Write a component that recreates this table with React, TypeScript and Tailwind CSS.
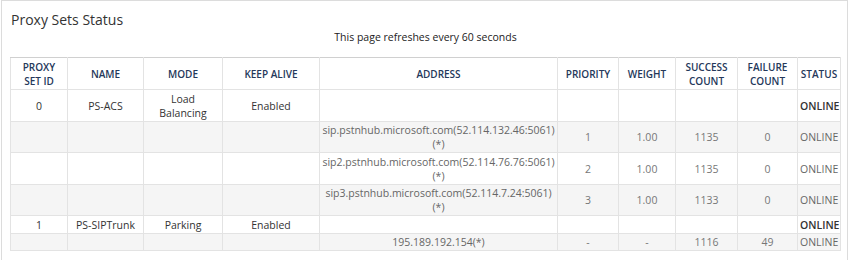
const cols = [57, 76, 79, 97, 238, 61, 57, 62, 60, 43]

type Row = {
  id: string
  name: string
  mode: string
  keepAlive: string
  address: string
  priority: string
  weight: string
  success: string
  failure: string
  status: string
  group?: boolean
  shaded?: boolean
  h: string
}

const rows: Row[] = [
  { id: "0", name: "PS-ACS", mode: "Load Balancing", keepAlive: "Enabled", address: "", priority: "", weight: "", success: "", failure: "", status: "ONLINE", group: true, h: "h-[32px]" },
  { id: "", name: "", mode: "", keepAlive: "", address: "sip.pstnhub.microsoft.com(52.114.132.46:5061)", priority: "1", weight: "1.00", success: "1135", failure: "0", status: "ONLINE", shaded: true, h: "h-[31px]" },
  { id: "", name: "", mode: "", keepAlive: "", address: "sip2.pstnhub.microsoft.com(52.114.76.76:5061)", priority: "2", weight: "1.00", success: "1135", failure: "0", status: "ONLINE", h: "h-[32px]" },
  { id: "", name: "", mode: "", keepAlive: "", address: "sip3.pstnhub.microsoft.com(52.114.7.24:5061)", priority: "3", weight: "1.00", success: "1133", failure: "0", status: "ONLINE", shaded: true, h: "h-[31px]" },
  { id: "1", name: "PS-SIPTrunk", mode: "Parking", keepAlive: "Enabled", address: "", priority: "", weight: "", success: "", failure: "", status: "ONLINE", group: true, h: "h-[18px]" },
  { id: "", name: "", mode: "", keepAlive: "", address: "195.189.192.154(*)", priority: "-", weight: "-", success: "1116", failure: "49", status: "ONLINE", shaded: true, h: "h-[17px]" },
]

const headers = [
  ["PROXY", "SET ID"],
  ["NAME"],
  ["MODE"],
  ["KEEP ALIVE"],
  ["ADDRESS"],
  ["PRIORITY"],
  ["WEIGHT"],
  ["SUCCESS", "COUNT"],
  ["FAILURE", "COUNT"],
  ["STATUS"],
]

const cell = "border border-[#e3e3e3] px-[2px] py-0 text-center align-middle leading-[14px]"

const App = () => {
  return (
    <div className="w-[850px] h-[260px] overflow-hidden bg-white font-['Open_Sans',sans-serif]">
      <div className="ml-[1px] w-[847px] h-[300px] border border-[#dcdcdc] px-[8px] pt-[10px]">
        <h1 className="text-[14px] leading-[18px] text-[#333] pl-[1px]">Proxy Sets Status</h1>
        <p className="text-center text-[10.5px] leading-[14px] text-[#222] mt-[1px] pl-[2px]">This page refreshes every 60 seconds</p>
        <table className="mt-[13px] border-collapse table-fixed w-[830px] text-[10.5px]">
          <colgroup>
            {cols.map((w, i) => (
              <col key={i} style={{ width: w }} />
            ))}
          </colgroup>
          <thead>
            <tr className="h-[32px]">
              {headers.map((lines, i) => (
                <th key={i} className={`${cell} text-[10px] font-semibold text-[#25385a] leading-[13px] border-t-[#d0d0d0]`}>
                  {lines.map((l, j) => (
                    <div key={j}>{l}</div>
                  ))}
                </th>
              ))}
            </tr>
          </thead>
          <tbody>
            {rows.map((r, i) => (
              <tr key={i} className={`${r.h} ${r.shaded ? "bg-[#f5f5f5]" : "bg-white"}`}>
                <td className={`${cell} text-[#333]`}>{r.id}</td>
                <td className={`${cell} text-[#333]`}>{r.name}</td>
                <td className={`${cell} text-[#333]`}>
                  {r.mode === "Load Balancing" ? (
                    <>
                      <div>Load</div>
                      <div>Balancing</div>
                    </>
                  ) : (
                    r.mode
                  )}
                </td>
                <td className={`${cell} text-[#333]`}>{r.keepAlive}</td>
                <td className={`${cell} text-[#666] whitespace-nowrap`}>
                  {r.address.includes("5061") ? (
                    <>
                      <div>{r.address}</div>
                      <div>(*)</div>
                    </>
                  ) : (
                    r.address
                  )}
                </td>
                <td className={`${cell} text-[#777]`}>{r.priority}</td>
                <td className={`${cell} text-[#777]`}>{r.weight}</td>
                <td className={`${cell} text-[#777]`}>{r.success}</td>
                <td className={`${cell} text-[#777]`}>{r.failure}</td>
                <td className={`${cell} px-0 ${r.group ? "font-semibold text-[#333]" : "text-[#666]"}`}>{r.status}</td>
              </tr>
            ))}
          </tbody>
        </table>
      </div>
    </div>
  )
}

export default App
